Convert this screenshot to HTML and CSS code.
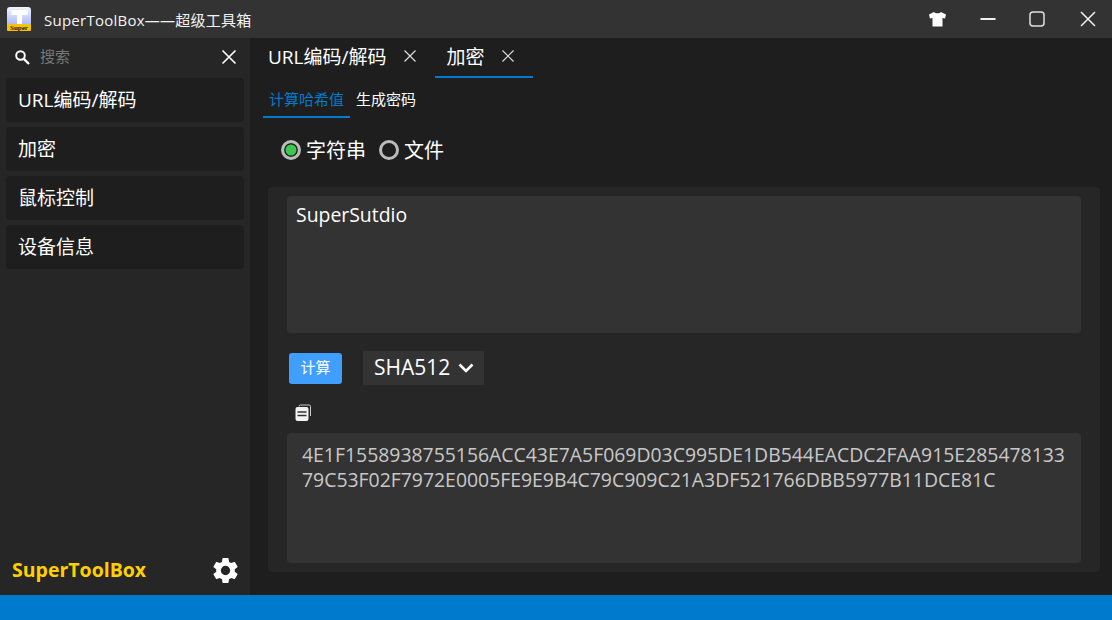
FILE: index.html
```html
<!DOCTYPE html>
<html lang="zh">
<head>
<meta charset="utf-8">
<title>SuperToolBox</title>
<link rel="stylesheet" href="styles.css">
</head>
<body>
<div class="app">
  <header class="titlebar">
    <svg class="logo" width="24" height="24" viewBox="0 0 24 24">
      <defs><linearGradient id="lg" x1="0" y1="0" x2="0" y2="1"><stop offset="0" stop-color="#f4f4ff"/><stop offset="1" stop-color="#8fa4f0"/></linearGradient></defs>
      <rect x="0" y="0" width="24" height="24" rx="3" fill="url(#lg)"/>
      <path d="M4.500 3h16v5h-5.500v9h-5v-9H4.500z" fill="#fff"/>
      <rect x="0" y="17" width="24" height="7" rx="1" fill="#f5c400"/>
      <text x="12" y="23" text-anchor="middle" class="logo-text">Super</text>
    </svg>
    <span class="app-title">SuperToolBox——超级工具箱</span>
    <div class="win-controls">
      <svg class="win-icon" width="19" height="16" viewBox="0 0 19 16"><path d="M6 1 L1 3.500 L2 7.500 L4.500 7 V15.500 H14.500 V7 L17 7.500 L18 3.500 L13 1 C12 2.800 7 2.800 6 1Z" fill="#fff"/></svg>
      <svg class="win-icon" width="16" height="16" viewBox="0 0 16 16"><path d="M0.500 8H15.500" stroke="#f0f0f0" stroke-width="2"/></svg>
      <svg class="win-icon" width="16" height="16" viewBox="0 0 16 16"><rect x="1" y="1" width="14" height="14" rx="3" fill="none" stroke="#e0e0e0" stroke-width="1.500"/></svg>
      <svg class="win-icon win-close" width="16" height="16" viewBox="0 0 16 16"><path d="M1 1L15 15M15 1L1 15" stroke="#f0f0f0" stroke-width="1.500"/></svg>
    </div>
  </header>
  <div class="body">
    <aside class="sidebar">
      <div class="search">
        <svg width="16" height="16" viewBox="0 0 16 16"><circle cx="6.500" cy="6.500" r="4.300" fill="none" stroke="#fff" stroke-width="2"/><path d="M9.800 9.800L15 15" stroke="#fff" stroke-width="2.400"/></svg>
        <span class="search-text">搜索</span>
        <svg width="16" height="16" viewBox="0 0 16 16"><path d="M1.500 1.500L14.500 14.500M14.500 1.500L1.500 14.500" stroke="#fff" stroke-width="1.600"/></svg>
      </div>
      <nav class="nav">
        <div class="nav-item">URL编码/解码</div>
        <div class="nav-item">加密</div>
        <div class="nav-item">鼠标控制</div>
        <div class="nav-item">设备信息</div>
      </nav>
      <div class="side-foot">
        <span class="brand">SuperToolBox</span>
        <svg width="31" height="31" viewBox="0 0 24 24"><path fill="#fff" d="M19.140 12.940c.04-.3.060-.61.060-.94s-.02-.64-.07-.94l2.030-1.580a.5.500 0 0 0 .12-.61l-1.920-3.320a.5.500 0 0 0-.59-.22l-2.390.96a7 7 0 0 0-1.620-.94l-.36-2.540a.48.480 0 0 0-.48-.41h-3.840a.48.480 0 0 0-.47.41l-.36 2.540c-.59.240-1.130.57-1.620.94l-2.390-.96a.48.480 0 0 0-.59.220L2.740 8.870a.48.480 0 0 0 .12.610l2.030 1.580c-.05.300-.09.630-.09.940s.02.640.07.940l-2.030 1.580a.5.500 0 0 0-.12.610l1.920 3.320c.12.220.37.290.59.220l2.390-.96c.5.380 1.030.7 1.620.94l.36 2.540c.05.240.24.410.48.410h3.840c.24 0 .44-.17.470-.41l.36-2.540c.59-.24 1.130-.56 1.620-.94l2.390.96c.22.080.47 0 .59-.22l1.920-3.320a.48.480 0 0 0-.12-.61zM12 15.600a3.600 3.600 0 1 1 0-7.200 3.600 3.600 0 0 1 0 7.200z"/></svg>
      </div>
    </aside>
    <main class="main">
      <div class="tabs">
        <div class="tab">
          <span>URL编码/解码</span>
          <svg width="12" height="12" viewBox="0 0 12 12"><path d="M0.500 0.500L11.500 11.500M11.500 0.500L0.500 11.500" stroke="#ddd" stroke-width="1.200"/></svg>
        </div>
        <div class="tab tab-active">
          <span>加密</span>
          <svg width="12" height="12" viewBox="0 0 12 12"><path d="M0.500 0.500L11.500 11.500M11.500 0.500L0.500 11.500" stroke="#ddd" stroke-width="1.200"/></svg>
        </div>
      </div>
      <div class="subtabs">
        <div class="subtab subtab-active">计算哈希值</div>
        <div class="subtab">生成密码</div>
      </div>
      <div class="radios">
        <label class="radio"><span class="dot dot-on"></span>字符串</label>
        <label class="radio"><span class="dot"></span>文件</label>
      </div>
      <section class="panel">
        <div class="box box-input">SuperSutdio</div>
        <div class="actions">
          <button class="btn"><span class="btn-label">计算</span></button>
          <div class="select"><span class="select-label">SHA512</span>
            <svg width="16" height="10" viewBox="0 0 16 10"><path d="M1.500 1.500L8 8L14.500 1.500" fill="none" stroke="#fff" stroke-width="2.600"/></svg>
          </div>
        </div>
        <div class="copy-row">
          <svg width="18" height="18" viewBox="0 0 18 18"><path d="M5 2.500A1.500 1.500 0 0 1 6.500 1H15a1.500 1.500 0 0 1 1.500 1.500V12" fill="none" stroke="#ccc" stroke-width="1"/><rect x="1.500" y="3" width="13" height="14" rx="2" fill="#f4f4f4"/><path d="M3.500 8H12.500M3.500 11.500H12.500" stroke="#333" stroke-width="1.400"/></svg>
        </div>
        <div class="box box-output">4E1F1558938755156ACC43E7A5F069D03C995DE1DB544EACDC2FAA915E28547813379C53F02F7972E0005FE9E9B4C79C909C21A3DF521766DBB5977B11DCE81C</div>
      </section>
    </main>
  </div>
  <footer class="statusbar"></footer>
</div>
</body>
</html>
```
FILE: styles.css
```css
* { box-sizing: border-box; }
html, body { margin: 0; padding: 0; height: 100%; }
body { font-family: "Open Sans", "Noto Sans CJK SC", sans-serif; color: #fff; background: #1e1e1e; overflow: hidden; }
.app { width: 1112px; height: 620px; display: flex; flex-direction: column; }
.titlebar { height: 38px; flex: none; background: #333; display: flex; align-items: center; padding-left: 7px; }
.logo { flex: none; }
.logo-text { font-family: "Liberation Serif", serif; font-size: 7px; font-weight: 700; fill: #222; }
.app-title { margin-left: 13px; font-size: 15px; letter-spacing: 0.25px; color: #f4f4f4; }
.win-controls { margin-left: auto; display: flex; align-items: center; gap: 33px; padding-right: 16px; }
.win-icon { display: block; }
.win-close { margin-left: 2px; }
.body { flex: 1; display: flex; min-height: 0; }
.sidebar { width: 250px; flex: none; background: #262626; display: flex; flex-direction: column; }
.search { height: 40px; display: flex; align-items: center; padding: 0 13px 2px 14px; gap: 10px; }
.search-text { flex: 1; font-size: 15px; color: #777; padding-bottom: 3px; }
.nav { display: flex; flex-direction: column; gap: 5px; padding: 0 6px; }
.nav-item { height: 44px; background: #1e1e1e; border-radius: 4px; display: flex; align-items: center; padding: 0 0 2px 12px; font-size: 19px; }
.side-foot { margin-top: auto; height: 50px; display: flex; align-items: center; justify-content: space-between; padding: 0 9px 0 12px; }
.brand { color: #ffd000; font-size: 19.500px; font-weight: 700; padding-bottom: 2px; }
.main { flex: 1; min-width: 0; display: flex; flex-direction: column; padding: 0 12px 23px 18px; background: #1e1e1e; }
.tabs { display: flex; height: 40px; }
.tab { display: flex; align-items: center; gap: 18px; height: 40px; padding: 0 19px 5px 0; font-size: 19px; }
.tab-active { padding: 0 19px 3px 11px; border-bottom: 2px solid #007acc; }
.subtabs { display: flex; height: 40px; margin-left: -5px; }
.subtab { height: 40px; padding: 3px 6px 0 6px; display: flex; align-items: center; font-size: 15px; border-bottom: 2px solid transparent; }
.subtab-active { color: #007acc; border-bottom-color: #007acc; }
.radios { display: flex; gap: 13px; height: 69px; padding: 0 0 7px 13px; align-items: center; }
.radio { display: flex; align-items: center; gap: 5px; font-size: 20px; }
.dot { width: 20px; height: 20px; border-radius: 50%; border: 3px solid #bbb; display: block; margin-top: 2px; }
.dot-on { background: #3cc84f; box-shadow: inset 0 0 0 1.500px #1e1e1e; }
.panel { flex: 1; background: #262626; border-radius: 4px; padding: 9px 19px 9px 19px; display: flex; flex-direction: column; min-height: 0; }
.box { background: #333; border-radius: 4px; }
.box-input { height: 137px; padding: 5px 9px; font-size: 19.400px; }
.actions { display: flex; align-items: center; gap: 21px; height: 70px; padding-left: 2px; }
.btn { width: 53px; height: 31px; border: 0; border-radius: 3px; background: #409eff; color: #fff; font: 15px "Open Sans", "Noto Sans CJK SC", sans-serif; padding: 0 0 3px; }
.btn-label { display: block; }
.select { height: 34px; width: 121px; background: #333; display: flex; align-items: center; gap: 8px; padding-left: 11px; font-size: 21px; }
.select-label { padding-bottom: 2px; }
.copy-row { height: 30px; padding: 0 0 11px 7px; display: flex; align-items: center; }
.box-output { flex: 1; padding: 9px 13px 0 15px; font-size: 19.400px; line-height: 25px; color: #c8c8c8; word-break: break-all; }
.statusbar { height: 25px; flex: none; background: #007acc; }
```
